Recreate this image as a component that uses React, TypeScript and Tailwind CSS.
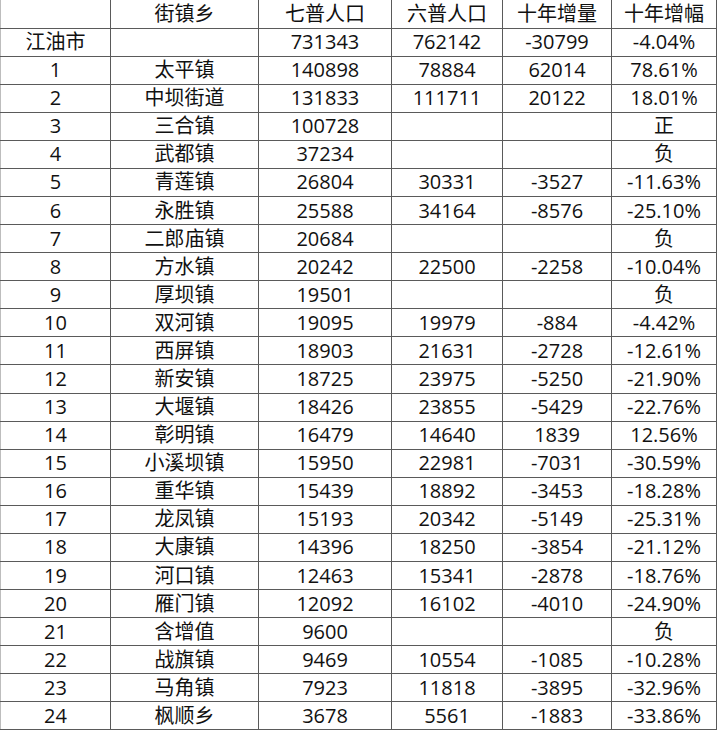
const rows: [string, string, string, string, string, string][] = [
  ["江油市", "", "731343", "762142", "-30799", "-4.04%"],
  ["1", "太平镇", "140898", "78884", "62014", "78.61%"],
  ["2", "中坝街道", "131833", "111711", "20122", "18.01%"],
  ["3", "三合镇", "100728", "", "", "正"],
  ["4", "武都镇", "37234", "", "", "负"],
  ["5", "青莲镇", "26804", "30331", "-3527", "-11.63%"],
  ["6", "永胜镇", "25588", "34164", "-8576", "-25.10%"],
  ["7", "二郎庙镇", "20684", "", "", "负"],
  ["8", "方水镇", "20242", "22500", "-2258", "-10.04%"],
  ["9", "厚坝镇", "19501", "", "", "负"],
  ["10", "双河镇", "19095", "19979", "-884", "-4.42%"],
  ["11", "西屏镇", "18903", "21631", "-2728", "-12.61%"],
  ["12", "新安镇", "18725", "23975", "-5250", "-21.90%"],
  ["13", "大堰镇", "18426", "23855", "-5429", "-22.76%"],
  ["14", "彰明镇", "16479", "14640", "1839", "12.56%"],
  ["15", "小溪坝镇", "15950", "22981", "-7031", "-30.59%"],
  ["16", "重华镇", "15439", "18892", "-3453", "-18.28%"],
  ["17", "龙凤镇", "15193", "20342", "-5149", "-25.31%"],
  ["18", "大康镇", "14396", "18250", "-3854", "-21.12%"],
  ["19", "河口镇", "12463", "15341", "-2878", "-18.76%"],
  ["20", "雁门镇", "12092", "16102", "-4010", "-24.90%"],
  ["21", "含增值", "9600", "", "", "负"],
  ["22", "战旗镇", "9469", "10554", "-1085", "-10.28%"],
  ["23", "马角镇", "7923", "11818", "-3895", "-32.96%"],
  ["24", "枫顺乡", "3678", "5561", "-1883", "-33.86%"],
];

const head = ["", "街镇乡", "七普人口", "六普人口", "十年增量", "十年增幅"];

export default function App() {
  return (
    <div
      className="w-[720px] h-[732px] bg-white overflow-hidden text-[#111] text-[20px]"
      style={{ fontFamily: '"Open Sans", "Noto Sans CJK SC", sans-serif' }}
    >
      <table className="table-fixed border-collapse w-[716px]">
        <colgroup>
          <col className="w-[110px]" />
          <col className="w-[148px]" />
          <col className="w-[133px]" />
          <col className="w-[111px]" />
          <col className="w-[109px]" />
          <col className="w-[105px]" />
        </colgroup>
        <thead>
          <tr className="h-[28px]">
            {head.map((h, i) => (
              <th
                key={i}
                className="font-normal text-center leading-none p-0 pt-[1px] border-x border-b border-[#5a5a5a] first:border-l-[#bdbdbd]"
              >
                {h}
              </th>
            ))}
          </tr>
        </thead>
        <tbody>
          {rows.map((r, i) => (
            <tr key={i} className="h-[28.08px]">
              {r.map((c, j) => (
                <td
                  key={j}
                  className="text-center leading-none p-0 border border-[#5a5a5a] first:border-l-[#bdbdbd]"
                >
                  {c}
                </td>
              ))}
            </tr>
          ))}
        </tbody>
      </table>
    </div>
  );
}
